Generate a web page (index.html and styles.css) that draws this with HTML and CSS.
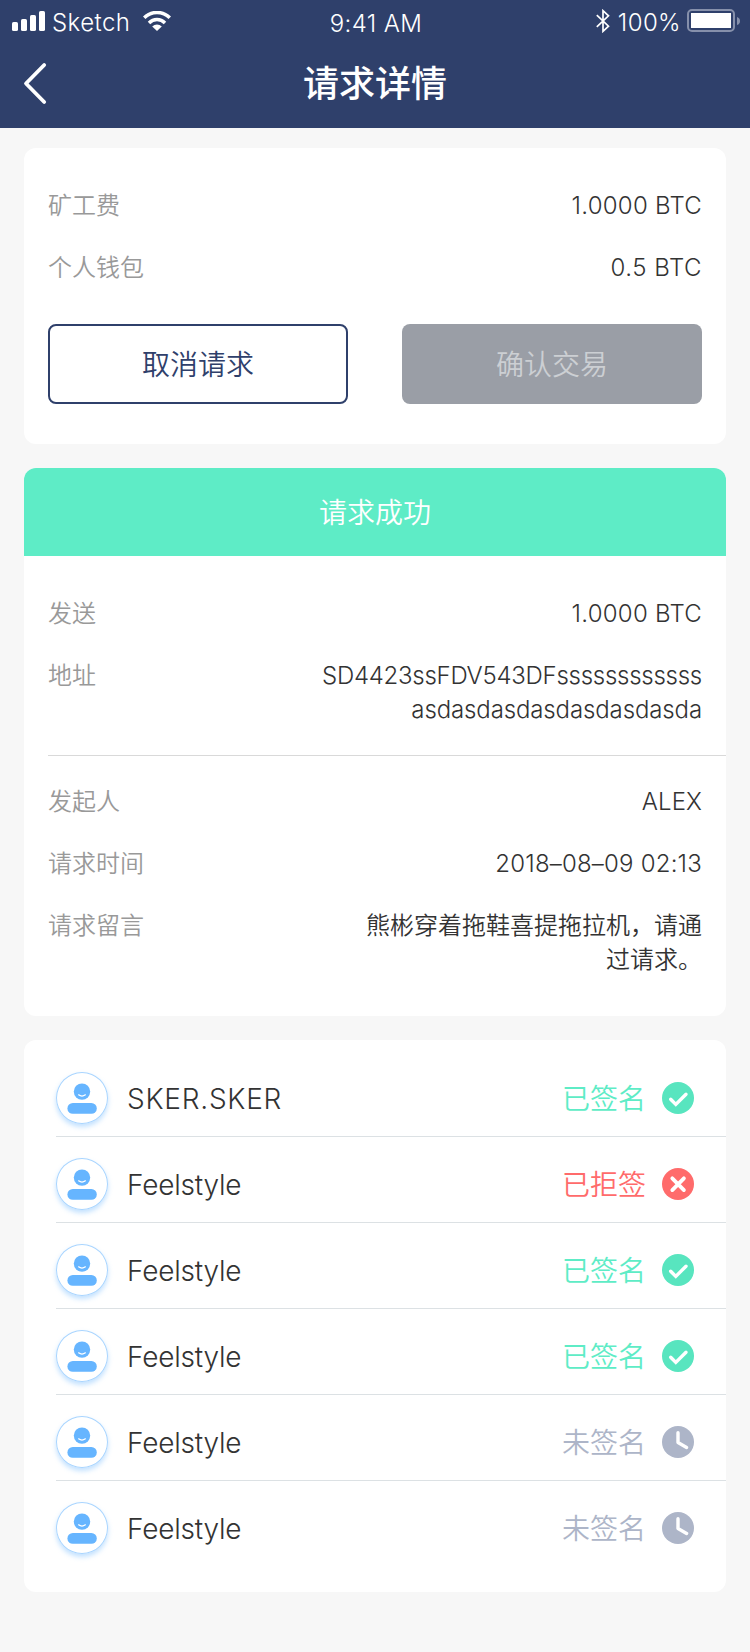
FILE: index.html
```html
<!DOCTYPE html>
<html lang="zh-CN">
<head>
<meta charset="utf-8">
<title>请求详情</title>
<link rel="stylesheet" href="styles.css">
</head>
<body>
<svg class="defs" width="0" height="0">
  <symbol id="avatar" viewBox="0 0 52 52">
    <circle cx="26" cy="19.6" r="8.2" fill="#66b5ff"/>
    <path d="M22.6 22.8Q26 25.4 29.4 22.8" fill="none" stroke="#fff" stroke-width="1.2" stroke-linecap="round"/>
    <rect x="11.4" y="31" width="29.4" height="10.8" rx="5.4" fill="#66b5ff"/>
  </symbol>
  <symbol id="ok" viewBox="0 0 32 32">
    <circle cx="16" cy="16" r="16" fill="#58e5bf"/>
    <path d="M8.7 17.2L13.8 22.4L24 12.2" fill="none" stroke="#fff" stroke-width="3.4" stroke-linecap="round"/>
  </symbol>
  <symbol id="no" viewBox="0 0 32 32">
    <circle cx="16" cy="16" r="16" fill="#ff6b6b"/>
    <path d="M10.3 10.3L21.9 22.1M21.9 10.3L10.3 22.1" fill="none" stroke="#fff" stroke-width="3.8" stroke-linecap="round"/>
  </symbol>
  <symbol id="wait" viewBox="0 0 32 32">
    <circle cx="16" cy="16" r="16" fill="#adb5c8"/>
    <path d="M16 6.8V16.6L24.6 21.4" fill="none" stroke="#fff" stroke-width="3.4" stroke-linecap="round" stroke-linejoin="round"/>
  </symbol>
</svg>

<header class="top">
  <div class="status">
    <div class="status-left">
      <svg class="signal" width="34" height="20" viewBox="0 0 34 20" fill="#fff">
        <rect x="0" y="11" width="6" height="9" rx="1.6"/><rect x="9" y="8" width="6" height="12" rx="1.6"/><rect x="18" y="4" width="6" height="16" rx="1.6"/><rect x="27" y="0" width="6" height="20" rx="1.6"/>
      </svg>
      <span class="carrier">Sketch</span>
      <svg class="wifi" width="28" height="20" viewBox="0 0 28 20" fill="none" stroke="#fff" stroke-width="3.5">
        <path d="M1.2 6.8A18 18 0 0 1 26.8 6.8"/><path d="M6 11.9A11.4 11.4 0 0 1 22 11.9"/><path d="M14 20L9.2 15.4A7 7 0 0 1 18.8 15.4Z" fill="#fff" stroke="none"/>
      </svg>
    </div>
    <span class="clock">9:41 AM</span>
    <div class="status-right">
      <svg width="14" height="24" viewBox="0 0 14 24" fill="none" stroke="#fff" stroke-width="1.7"><path d="M0.8 6.2L12.5 17.2L7 22.3V1.7L12.5 6.8L0.8 17.8"/></svg>
      <span class="percent">100%</span>
      <svg class="battery" width="53" height="23" viewBox="0 0 53 23"><rect x="1" y="1" width="46" height="21" rx="4" fill="none" stroke="#8690ab" stroke-width="2"/><rect x="4" y="4" width="40" height="15" fill="#fff"/><path d="M50 8Q53 9 53 12Q53 15 50 16Z" fill="#8690ab"/></svg>
    </div>
  </div>
  <div class="nav">
    <svg class="back" width="26" height="44" viewBox="0 0 26 44" fill="none" stroke="#fff" stroke-width="3.8" stroke-linecap="round" stroke-linejoin="round"><path d="M21.2 3L3 21.5L21.2 40"/></svg>
    <h1 class="title">请求详情</h1>
  </div>
</header>

<main class="page">
  <section class="card fees">
    <dl class="rows">
      <div class="row"><dt>矿工费</dt><dd class="num">1.0000 BTC</dd></div>
      <div class="row"><dt>个人钱包</dt><dd class="num short">0.5 BTC</dd></div>
    </dl>
    <div class="actions">
      <button class="btn btn-outline">取消请求</button>
      <button class="btn btn-disabled" disabled>确认交易</button>
    </div>
  </section>

  <section class="card">
    <div class="banner">请求成功</div>
    <dl class="rows send">
      <div class="row"><dt>发送</dt><dd class="num">1.0000 BTC</dd></div>
      <div class="row"><dt>地址</dt><dd><span class="addr1">SD4423ssFDV543DFssssssssssss</span><br><span class="addr2">asdasdasdasdasdasdasda</span></dd></div>
    </dl>
    <dl class="rows origin">
      <div class="row"><dt>发起人</dt><dd class="alex">ALEX</dd></div>
      <div class="row"><dt>请求时间</dt><dd class="date">2018–08–09 02:13</dd></div>
      <div class="row"><dt>请求留言</dt><dd class="message">熊彬穿着拖鞋喜提拖拉机，请通过请求。</dd></div>
    </dl>
  </section>

  <ul class="card signers">
    <li class="signer"><svg class="avatar"><use href="#avatar"/></svg><span class="name sker">SKER.SKER</span><span class="state signed">已签名</span><svg class="mark"><use href="#ok"/></svg></li>
    <li class="signer"><svg class="avatar"><use href="#avatar"/></svg><span class="name">Feelstyle</span><span class="state refused">已拒签</span><svg class="mark"><use href="#no"/></svg></li>
    <li class="signer"><svg class="avatar"><use href="#avatar"/></svg><span class="name">Feelstyle</span><span class="state signed">已签名</span><svg class="mark"><use href="#ok"/></svg></li>
    <li class="signer"><svg class="avatar"><use href="#avatar"/></svg><span class="name">Feelstyle</span><span class="state signed">已签名</span><svg class="mark"><use href="#ok"/></svg></li>
    <li class="signer"><svg class="avatar"><use href="#avatar"/></svg><span class="name">Feelstyle</span><span class="state waiting">未签名</span><svg class="mark"><use href="#wait"/></svg></li>
    <li class="signer"><svg class="avatar"><use href="#avatar"/></svg><span class="name">Feelstyle</span><span class="state waiting">未签名</span><svg class="mark"><use href="#wait"/></svg></li>
  </ul>
</main>
</body>
</html>
```
FILE: styles.css
```css
* { box-sizing: border-box; margin: 0; padding: 0; }
body {
  width: 750px;
  min-height: 1652px;
  background: #f7f7f7;
  color: #333;
  font-family: Inter, "Noto Sans CJK SC", sans-serif;
  font-weight: 350;
}
.defs { position: absolute; }
svg { display: block; flex: none; }

.top { height: 128px; background: #2f406b; color: #fff; }
.status {
  display: grid;
  grid-template-columns: 1fr auto 1fr;
  align-items: center;
  height: 40px;
  padding: 0 10px 0 12px;
  font-size: 24px;
  font-weight: 300;
  line-height: 34px;
}
.status-left, .status-right { display: flex; align-items: center; }
.status-right { justify-content: flex-end; }
.carrier { margin-left: 6px; padding-top: 5px; letter-spacing: .45px; }
.wifi { margin-left: 13px; }
.clock { padding-top: 7px; letter-spacing: .4px; }
.percent { margin-left: 8px; padding-top: 5px; letter-spacing: .4px; }
.battery { margin-left: 6px; }
.nav { display: grid; grid-template-columns: 100px 1fr 100px; align-items: center; height: 88px; }
.back { margin-left: 23px; }
.title { text-align: center; font-size: 36px; font-weight: 500; line-height: 50px; }

.page { display: flex; flex-direction: column; gap: 24px; padding: 20px 24px 60px; }
.card { background: #fff; border-radius: 12px; overflow: hidden; }
.fees { padding: 41px 24px 40px; }
.rows { display: flex; flex-direction: column; gap: 28px; }
.row { display: flex; justify-content: space-between; font-size: 24px; line-height: 34px; }
.row dt { color: #999; }
.row dd { text-align: right; }
.num { letter-spacing: .25px; }
.short { letter-spacing: .5px; }
.addr1 { letter-spacing: -.26px; }
.addr2 { letter-spacing: -.12px; }
.alex { letter-spacing: .1px; }
.date { letter-spacing: .2px; }
.row .message { width: 340px; }
.actions { display: flex; justify-content: space-between; margin-top: 39px; }
.btn { width: 300px; height: 80px; border: 0; border-radius: 8px; font: inherit; font-size: 28px; padding-bottom: 3px; }
.btn-outline { border: 2px solid #2f406b; background: #fff; color: #2f406b; }
.btn-disabled { background: #9a9ea6; color: #cccfd3; }
.banner { height: 88px; padding-top: 1px; background: #5eecc6; color: #fff; font-size: 28px; line-height: 88px; text-align: center; }
.send { padding: 41px 24px 28px; }
.origin { margin-left: 24px; padding: 29px 24px 39px 0; border-top: 1px solid #d9d9d9; }

.signers { list-style: none; padding: 11px 0 25px 32px; }
.signer { display: flex; align-items: center; height: 86px; padding: 21px 32px 12px 0; border-bottom: 1px solid #dce1e4; }
.signer:last-child { border-bottom-color: transparent; }
.avatar { width: 52px; height: 52px; border-radius: 50%; background: #fff; box-shadow: inset 0 0 0 1px #a9d5ff, 0 3px 5px rgba(102, 181, 255, .4); }
.name { flex: 1; margin-left: 19px; padding-top: 1px; font-size: 28px; line-height: 40px; letter-spacing: -.2px; }
.sker { letter-spacing: .75px; }
.state { padding-top: 1px; font-size: 28px; line-height: 40px; }
.mark { width: 32px; height: 32px; margin-left: 16px; }
.signed { color: #5eecc6; }
.refused { color: #ff6b6b; }
.waiting { color: #adb5c8; }
```
